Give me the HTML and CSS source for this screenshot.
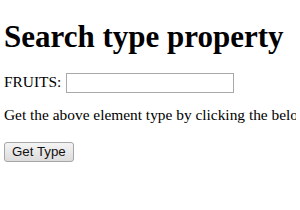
FILE: index.html
```html
<html>

<head>
    <link rel="stylesheet" href="styles.css">
</head>

<body>
    <h1>Search type property</h1>

    <div class="field">
        FRUITS: <input type="text" id="fruits">
    </div>

    <p class="hint">Get the above element type by clicking the below button.</p>

    <button onclick="gettype()">Get Type</button>

    <p id="result"></p>

    <script>
        function gettype() {
            var x = document.getElementById("fruits").type;
            document.getElementById("result").innerHTML = x;
        }
    </script>
</body>

</html>
```

FILE: styles.css
```css
body {
    font-family: "Liberation Serif", "Times New Roman", serif;
    font-size: 15.4px;
    margin: 0 4px;
    padding-top: 1px;
    white-space: nowrap;
    overflow: hidden;
}

h1 {
    font-size: 31px;
    margin: 18px 0 18px;
}

.field input {
    box-sizing: border-box;
    width: 168px;
    height: 20px;
    border: 1px solid #a9a9a9;
    padding: 1px 2px;
    margin-left: 1px;
    vertical-align: middle;
}

.hint {
    margin: 13px 0 18px;
}

button {
    font-family: "Liberation Sans", Arial, sans-serif;
    font-size: 13.3px;
    line-height: 16px;
    padding: 1px 7px;
    border: 1px solid #a6a6a6;
    border-radius: 3px;
    background: linear-gradient(#f4f4f4, #dcdcdc);
    color: #111;
}
```
